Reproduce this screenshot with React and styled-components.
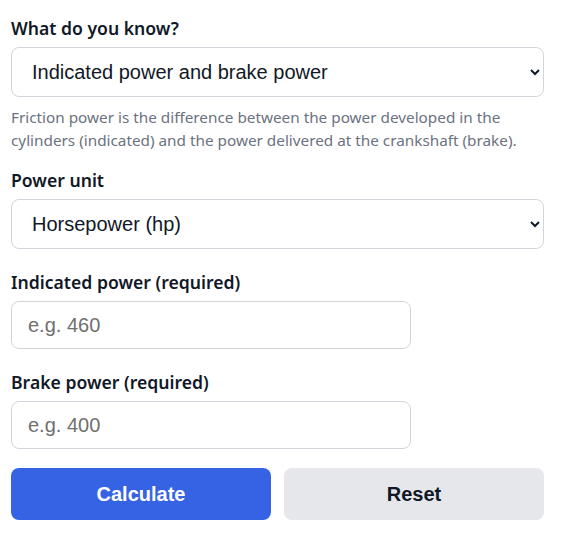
import React, { useState } from "react";
import styled, { createGlobalStyle } from "styled-components";

const GlobalStyle = createGlobalStyle`
  html, body {
    margin: 0;
    padding: 0;
    background: #fff;
  }
  * {
    box-sizing: border-box;
  }
`;

const Form = styled.form`
  width: 533px;
  margin: 15px 0 0 11px;
  display: flex;
  flex-direction: column;
  gap: 20px;
`;

const Field = styled.div`
  display: flex;
  flex-direction: column;
`;

const Label = styled.label`
  font-family: "Noto Sans", "Open Sans", sans-serif;
  font-weight: 600;
  font-size: 17.6px;
  line-height: 27px;
  color: #111827;
  margin-bottom: 5px;
`;

const Select = styled.select`
  width: 100%;
  height: 50px;
  padding: 0 6px 0 16px;
  font-family: "Liberation Sans", Arial, sans-serif;
  font-size: 20px;
  color: #111827;
  background: #fff;
  border: 1px solid #d1d5db;
  border-radius: 8px;
  outline: none;
`;

const Input = styled.input`
  width: ${(p) => p.w || "100%"};
  height: 48px;
  padding: 0 16px;
  font-family: "Liberation Sans", Arial, sans-serif;
  font-size: 20px;
  color: #111827;
  background: #fff;
  border: 1px solid #d1d5db;
  border-radius: 8px;
  outline: none;
  &::placeholder {
    color: #6f6f6f;
  }
`;

const Help = styled.p`
  margin: 9px 0 -4px;
  font-family: "Noto Sans", "Open Sans", sans-serif;
  font-size: 15.3px;
  line-height: 22.5px;
  color: #6b7280;
`;

const Actions = styled.div`
  display: grid;
  grid-template-columns: 1fr 1fr;
  gap: 13px;
  margin-top: -1px;
`;

const Button = styled.button`
  height: 52px;
  border: none;
  border-radius: 8px;
  font-family: "Liberation Sans", Arial, sans-serif;
  font-weight: 700;
  font-size: 20px;
  cursor: pointer;
  background: ${(p) => (p.primary ? "#3563e4" : "#e5e7eb")};
  color: ${(p) => (p.primary ? "#fff" : "#111827")};
`;

export default function App() {
  const [known, setKnown] = useState("ib");
  const [unit, setUnit] = useState("hp");
  const [indicated, setIndicated] = useState("");
  const [brake, setBrake] = useState("");

  function reset() {
    setIndicated("");
    setBrake("");
  }

  return (
    <>
      <GlobalStyle />
      <Form onSubmit={(e) => e.preventDefault()}>
        <Field>
          <Label htmlFor="known">What do you know?</Label>
          <Select id="known" value={known} onChange={(e) => setKnown(e.target.value)}>
            <option value="ib">Indicated power and brake power</option>
            <option value="if">Indicated power and friction power</option>
            <option value="bf">Brake power and friction power</option>
          </Select>
          <Help>
            Friction power is the difference between the power developed in the
            cylinders (indicated) and the power delivered at the crankshaft (brake).
          </Help>
        </Field>
        <Field>
          <Label htmlFor="unit">Power unit</Label>
          <Select id="unit" value={unit} onChange={(e) => setUnit(e.target.value)}>
            <option value="hp">Horsepower (hp)</option>
            <option value="kw">Kilowatts (kW)</option>
            <option value="w">Watts (W)</option>
          </Select>
        </Field>
        <Field>
          <Label htmlFor="ind">Indicated power (required)</Label>
          <Input
            id="ind"
            w="400px"
            placeholder="e.g. 460"
            value={indicated}
            onChange={(e) => setIndicated(e.target.value)}
          />
        </Field>
        <Field>
          <Label htmlFor="brake">Brake power (required)</Label>
          <Input
            id="brake"
            w="400px"
            placeholder="e.g. 400"
            value={brake}
            onChange={(e) => setBrake(e.target.value)}
          />
        </Field>
        <Actions>
          <Button primary type="submit">Calculate</Button>
          <Button type="button" onClick={reset}>Reset</Button>
        </Actions>
      </Form>
    </>
  );
}
